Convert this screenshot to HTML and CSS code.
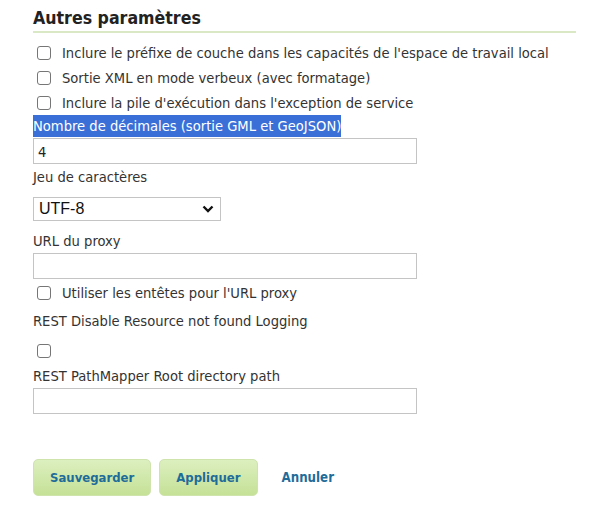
FILE: index.html
```html
<!DOCTYPE html>
<html lang="fr">
<head>
<meta charset="utf-8">
<title>Autres paramètres</title>
<link rel="stylesheet" href="styles.css">
</head>
<body>
<div class="page">
  <h2 class="title">Autres paramètres</h2>
  <ul class="fields">
    <li class="check-row"><input type="checkbox" class="cb"><label>Inclure le préfixe de couche dans les capacités de l'espace de travail local</label></li>
    <li class="check-row"><input type="checkbox" class="cb"><label>Sortie XML en mode verbeux (avec formatage)</label></li>
    <li class="check-row"><input type="checkbox" class="cb"><label>Inclure la pile d'exécution dans l'exception de service</label></li>
    <li class="field">
      <label class="lbl sel">Nombre de décimales (sortie GML et GeoJSON)</label>
      <input type="text" class="txt first" value="4">
    </li>
    <li class="field charset">
      <label class="lbl">Jeu de caractères</label>
      <div class="select"><span>UTF-8</span>
        <svg width="12" height="8" viewBox="0 0 12 8"><path d="M1.5 1.5 L6 6 L10.5 1.5" fill="none" stroke="#111" stroke-width="2.4"/></svg>
      </div>
    </li>
    <li class="field proxy">
      <label class="lbl">URL du proxy</label>
      <input type="text" class="txt">
    </li>
    <li class="check-row headers"><input type="checkbox" class="cb"><label>Utiliser les entêtes pour l'URL proxy</label></li>
    <li class="field rest">
      <label class="lbl">REST Disable Resource not found Logging</label>
      <div class="solo"><input type="checkbox" class="cb"></div>
    </li>
    <li class="field">
      <label class="lbl">REST PathMapper Root directory path</label>
      <input type="text" class="txt">
    </li>
  </ul>
  <div class="buttons">
    <a class="btn">Sauvegarder</a>
    <a class="btn">Appliquer</a>
    <a class="link">Annuler</a>
  </div>
</div>
</body>
</html>
```
FILE: styles.css
```css
* { box-sizing: border-box; }
body {
  margin: 0;
  background: #fff;
  font-family: "DejaVu Sans Condensed", "DejaVu Sans", sans-serif;
  font-size: 14.6px;
  color: #333;
}
.page {
  padding: 7px 15px 0 33px;
}
.title {
  margin: 0;
  font-size: 17.6px;
  font-weight: bold;
  color: #222;
  line-height: 23px;
  padding-bottom: 1px;
  border-bottom: 2px solid #dbe8c6;
}
.fields {
  list-style: none;
  margin: 0;
  padding: 7px 0 0 0;
}
.check-row {
  display: flex;
  align-items: center;
  height: 25px;
  padding-left: 4px;
}
.cb {
  appearance: none;
  width: 14px;
  height: 14px;
  margin: 0 11px 0 0;
  border: 1px solid #767676;
  border-radius: 3px;
  background: #fff;
  flex: none;
}
.field {
  display: flex;
  flex-direction: column;
  align-items: flex-start;
}
.lbl {
  display: block;
  line-height: 22px;
}
.sel {
  background: #3a6fd8;
  color: #fff;
}
.txt {
  width: 384px;
  height: 26px;
  border: 1px solid #c4c4c4;
  padding: 0 4px;
  font-family: inherit;
  font-size: 14.6px;
  color: #222;
  margin: 1px 0 0 0;
}
.charset { margin-top: 2px; }
.select {
  margin-top: 9px;
  width: 188px;
  height: 24px;
  border: 1px solid #c4c4c4;
  display: flex;
  align-items: center;
  justify-content: space-between;
  padding: 0 6px 0 5px;
  font-family: "Liberation Sans", Arial, sans-serif;
  font-size: 16px;
  color: #111;
}
.proxy { margin-top: 9px; }
.headers { margin-top: 1px; }
.rest { margin-top: 5px; }
.solo { padding: 12px 0 7px 4px; display: flex; }
.buttons {
  display: flex;
  align-items: center;
  gap: 8px;
  margin-top: 45px;
}
.btn {
  display: inline-block;
  height: 37px;
  line-height: 35px;
  padding: 0 16px;
  border: 1px solid #cfe3ad;
  border-radius: 5px;
  background: linear-gradient(#dcefbf, #c5e197);
  color: #1e6c9a;
  font-weight: bold;
  font-size: 13px;
}
.link {
  margin-left: 16px;
  color: #1e6c9a;
  font-weight: bold;
  font-size: 13.2px;
}
```
